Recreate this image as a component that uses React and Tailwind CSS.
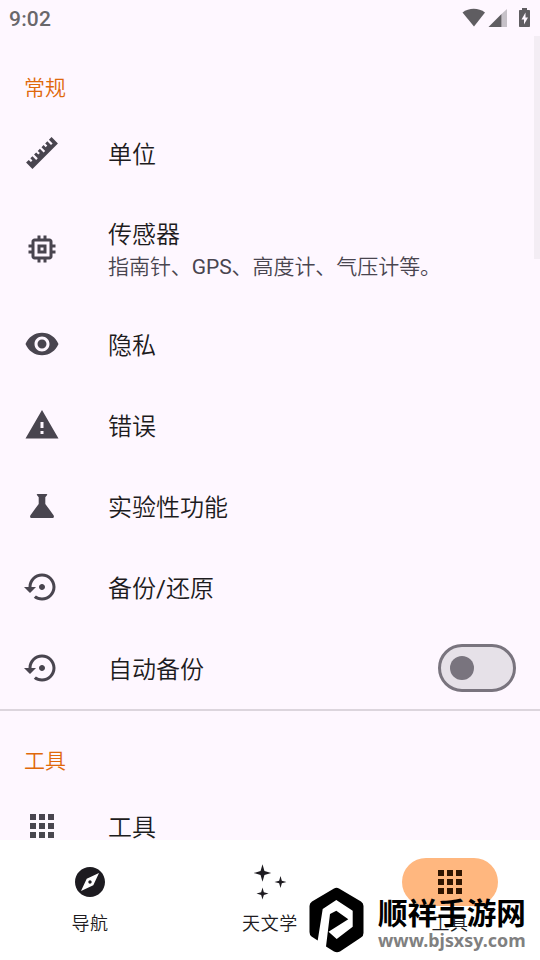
import clsx from 'clsx';

const icons = {
  ruler: 'M1.39 18.36L3.16 16.6L4.58 18L5.64 16.95L4.22 15.54L5.64 14.12L8.11 16.6L9.17 15.54L6.7 13.06L8.11 11.65L9.53 13.06L10.59 12L9.17 10.59L10.59 9.17L13.06 11.65L14.12 10.59L11.65 8.11L13.06 6.7L14.47 8.11L15.54 7.05L14.12 5.64L15.54 4.22L18 6.7L19.07 5.64L16.6 3.16L18.36 1.39L22.61 5.64L5.64 22.61Z',
  sensors: 'M15 9H9v6h6V9zm-2 4h-2v-2h2v2zm8-2V9h-2V7c0-1.1-.9-2-2-2h-2V3h-2v2h-2V3H9v2H7c-1.1 0-2 .9-2 2v2H3v2h2v2H3v2h2v2c0 1.1.9 2 2 2h2v2h2v-2h2v2h2v-2h2c1.1 0 2-.9 2-2v-2h2v-2h-2v-2h2zm-4 6H7V7h10v10z',
  eye: 'M12 4.5C7 4.5 2.73 7.61 1 12c1.73 4.39 6 7.5 11 7.5s9.27-3.11 11-7.5c-1.73-4.39-6-7.5-11-7.5zM12 17c-2.76 0-5-2.24-5-5s2.24-5 5-5 5 2.24 5 5-2.24 5-5 5zm0-8c-1.66 0-3 1.34-3 3s1.34 3 3 3 3-1.34 3-3-1.34-3-3-3z',
  alert: 'M1 21h22L12 2 1 21zm12-3h-2v-2h2v2zm0-4h-2v-4h2v4z',
  flask: 'M9 4h6c.5 0 .6.4.4.7L14.2 6.1v4.5l5.5 7.5c.6 1 .1 1.900-1 1.900H5.300c-1.100 0-1.600-.9-1-1.900l5.500-7.500V6.100L8.600 4.700c-.2-.3-.1-.7.4-.7z',
  restore: 'M14 12c0-1.1-.9-2-2-2s-2 .9-2 2 .9 2 2 2 2-.9 2-2zm-2-9c-4.97 0-9 4.03-9 9H0l4 4 4-4H5c0-3.87 3.13-7 7-7s7 3.13 7 7-3.13 7-7 7c-1.51 0-2.91-.49-4.06-1.3l-1.42 1.44C8.04 20.3 9.94 21 12 21c4.97 0 9-4.03 9-9s-4.03-9-9-9z',
  apps: 'M4 8h4V4H4v4zm6 12h4v-4h-4v4zm-6 0h4v-4H4v4zm0-6h4v-4H4v4zm6 0h4v-4h-4v4zm6-10v4h4V4h-4zm-6 4h4V4h-4v4zm6 6h4v-4h-4v4zm0 6h4v-4h-4v4z',
  compass: 'M12 10.9c-.61 0-1.1.49-1.1 1.1s.49 1.1 1.1 1.1c.61 0 1.1-.49 1.1-1.1s-.49-1.1-1.1-1.1zM12 2C6.48 2 2 6.48 2 12s4.48 10 10 10 10-4.48 10-10S17.52 2 12 2zm2.19 12.19L6 18l3.81-8.19L18 6l-3.81 8.19z',
  stars: 'M7 .2L8.300 4.700L12.800 6L8.300 7.300L7 11.800L5.700 7.300L1.200 6L5.700 4.700zM19 8L19.900 11.100L23 12L19.900 12.900L19 16L18.100 12.900L15 12L18.100 11.100zM7 15.700L7.900 18.800L11 19.700L7.900 20.600L7 23.700L6.100 20.600L3 19.700L6.100 18.800z',
};

const general = [
  { icon: 'ruler', title: '单位' },
  { icon: 'sensors', title: '传感器', summary: <>指南针、<span className="font-normal">GPS</span>、高度计、气压计等。</> },
  { icon: 'eye', title: '隐私' },
  { icon: 'alert', title: '错误' },
  { icon: 'flask', title: '实验性功能' },
  { icon: 'restore', title: <>备份<span className="font-normal">/</span>还原</> },
  { icon: 'restore', title: '自动备份', toggle: true },
];

const tabs = [
  { icon: 'compass', label: '导航' },
  { icon: 'stars', label: '天文学' },
  { icon: 'apps', label: '工具', active: true },
];

const Icon = ({ name, className }) => (
  <svg viewBox="0 0 24 24" fill="currentColor" className={clsx('size-9 shrink-0', className)}>
    <path d={icons[name]} />
  </svg>
);

const StatusBar = () => (
  <div className="h-9 shrink-0 flex items-center justify-between pl-[9px] pr-[10px] text-[#5f5d61]">
    <span className="pt-0.5 font-[Roboto] text-[21px] leading-9 tracking-[0.2px] font-medium text-[#69676b]">9:02</span>
    <svg width="68" height="22" viewBox="0 0 68 22" fill="currentColor">
      <path d="M0.5 5.5C7 .6 16.500 .6 23 5.500L12 19.500z" />
      <path d="M39.500 7V20H26.500z" />
      <path d="M39.500 7L45 2V20H39.500z" opacity="0.35" />
      <path d="M60 1h5v2h2.200q.8 0 .8.800V19.200q0 .8-.8.800H57.800q-.8 0-.8-.800V3.800q0-.8.800-.800H60z" />
      <path d="M63.500 5.500L59.500 12.500H62V17.500L66 10.500H63.500z" fill="#fef7ff" />
    </svg>
  </div>
);

const Switch = () => (
  <div className="ml-auto w-[78px] h-12 rounded-full border-3 border-[#79747e] bg-[#e6e1e8] flex items-center pl-[9px]">
    <div className="size-6 rounded-full bg-[#79747e]" />
  </div>
);

const Row = ({ icon, title, summary, toggle }) => (
  <div className={clsx('shrink-0 flex items-center px-6', summary ? 'h-[110px]' : 'h-[81px]')}>
    <Icon name={icon} className="text-[#49454f]" />
    <div className="ml-12 pt-1">
      <div className="text-2xl leading-8 text-[#1d1b20]">{title}</div>
      {summary && <div className="text-[21px] leading-8 tracking-[-0.06px] text-[#49454f]">{summary}</div>}
    </div>
    {toggle && <Switch />}
  </div>
);

const Watermark = () => (
  <div className="absolute left-[309px] top-[887px] flex">
    <svg width="55" height="66" viewBox="0 0 55 66">
      <path d="M25 1.500Q27.500 0 30 1.500L52 14.500Q54.500 16 54.500 19V46Q54.500 49 52 50.500L31 64.500Q28 66 25 64.500L17 59.500L21 27L27.300 23.700L39.300 32.300L19.500 44.800L27.700 52L43.700 39.700V23.700L27.300 13L13.700 22L8.700 53.500L2.500 49.500Q.5 48 .5 45V19Q.5 16 3 14.500z" />
    </svg>
    <div className="ml-[14px] mt-[11px] whitespace-nowrap">
      <div className="text-[29.6px] leading-8 font-bold text-black">顺祥手游网</div>
      <div className="-mt-px font-['Noto_Sans'] text-[17.9px] leading-[22px] font-bold text-[#808080]">www.bjsxsy.com</div>
    </div>
  </div>
);

const App = () => {
  return (
    <div className="relative w-[540px] h-[960px] overflow-hidden flex flex-col bg-[#fef7ff] font-[Roboto,'Noto_Sans_CJK_SC',sans-serif] font-[350]">
      <StatusBar />

      <div className="flex-1 min-h-0 flex overflow-hidden">
        <div className="flex-1 flex flex-col">
          <div className="h-[76.5px] shrink-0 pt-9 px-6 text-[21px] leading-8 text-[#e0680a]">常规</div>
          {general.map(item => (
            <Row key={item.icon + (item.toggle ? '-auto' : '')} {...item} />
          ))}
          <div className="h-[2px] shrink-0 -mr-1.5 bg-[#dcd5dd]" />
          <div className="h-[75px] shrink-0 pt-[34px] px-6 text-[21px] leading-8 text-[#e0680a]">工具</div>
          <Row icon="apps" title="工具" />
        </div>
        <div className="w-1.5 -ml-1.5 h-[223px] bg-[#f3edf4]" />
      </div>

      <div className="h-[120px] shrink-0 grid grid-cols-3 bg-white">
        {tabs.map(tab => (
          <div key={tab.label} className="flex flex-col items-center pt-[18px]">
            <div className={clsx('w-24 h-12 rounded-full flex items-center justify-center', tab.active ? 'bg-[#ffb77f] text-[#2f1400]' : 'text-[#1d1b20]')}>
              <Icon name={tab.icon} />
            </div>
            <span className="mt-1 text-lg leading-7 tracking-[0.6px] text-[#1d1b20]">{tab.label}</span>
          </div>
        ))}
      </div>

      <Watermark />
    </div>
  );
};

export default App;
